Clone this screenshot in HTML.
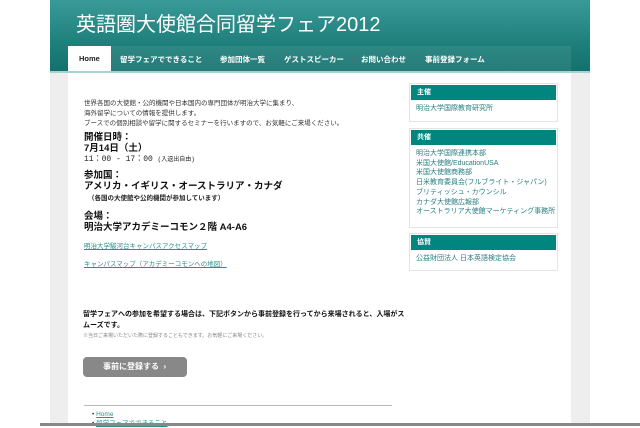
<!DOCTYPE html>
<html><head><meta charset="utf-8"><style>
*{margin:0;padding:0;box-sizing:border-box}
body{width:640px;height:426px;overflow:hidden;background:#fff;position:relative;font-family:"Liberation Sans","Noto Sans CJK JP",sans-serif;}
.a{position:absolute;white-space:nowrap}
#hd{left:50px;top:0;width:540px;height:72px;background:linear-gradient(#3a9a98,#1e7f7b 60%,#13716d)}
#nav{left:68px;top:46px;width:503px;height:25px;background:rgba(255,255,255,0.08)}
#bar{left:50px;top:71px;width:540px;height:2px;background:#a6d2d0}
#gr{left:50px;top:73px;width:540px;height:351px;background:#eee}
#wh{left:68px;top:73px;width:503px;height:351px;background:#fff}
#bot{left:40px;top:423px;width:600px;height:3px;background:#888}
.n{font-size:7.5px;font-weight:bold;color:#fff;top:54px}
.t{font-size:6.5px;color:#333}
.h{font-size:9.5px;font-weight:bold;color:#111}
.lk{font-size:6.5px;color:#2a8f8b;text-decoration:underline}
.box{position:absolute;left:409px;width:149px;background:#fff;border:1px solid #e4e4e4}
.bh{background:#00857f;color:#fff;font-size:7px;font-weight:bold;height:15px;line-height:15px;padding-left:6px;margin:1px}
.bi{font-size:7px;color:#2a7f80;padding:3px 0 0 6px;line-height:9.7px}
</style></head><body>
<div class="a" id="hd"></div>
<div class="a" id="nav"></div>
<div class="a" id="bar"></div>
<div class="a" id="gr"></div>
<div class="a" id="wh"></div>
<div class="a" style="left:76px;top:8px;font-size:20px;color:#fff">英語圏大使館合同留学フェア2012</div>
<div class="a" style="left:68px;top:46px;width:43px;height:25px;background:#fff"></div>
<div class="a n" style="left:79px;color:#222">Home</div>
<div class="a n" style="left:120px">留学フェアでできること</div>
<div class="a n" style="left:220px">参加団体一覧</div>
<div class="a n" style="left:284px">ゲストスピーカー</div>
<div class="a n" style="left:361px">お問い合わせ</div>
<div class="a n" style="left:425px">事前登録フォーム</div>

<div class="a t" style="left:84px;top:99px;line-height:10px">世界各国の大使館・公的機関や日本国内の専門団体が明治大学に集まり、<br>海外留学についての情報を提供します。<br>ブースでの個別相談や留学に関するセミナーを行いますので、お気軽にご来場ください。</div>
<div class="a h" style="left:84px;top:132px;line-height:11px">開催日時：<br>7月14日（土）</div>
<div class="a" style="left:84px;top:153px;font-size:8px;color:#222;font-family:'Liberation Mono','Noto Sans CJK JP',monospace">11：00 - 17：00 <span style="font-size:6px">(入退出自由)</span></div>
<div class="a h" style="left:84px;top:170px;line-height:11px">参加国：<br>アメリカ・イギリス・オーストラリア・カナダ</div>
<div class="a" style="left:88px;top:192px;font-size:6.5px;font-weight:bold;color:#222">（各国の大使館や公的機関が参加しています）</div>
<div class="a h" style="left:84px;top:211px;line-height:11px">会場：<br>明治大学アカデミーコモン２階 A4-A6</div>
<div class="a lk" style="left:84px;top:240px">明治大学駿河台キャンパスアクセスマップ</div>
<div class="a lk" style="left:84px;top:258px">キャンパスマップ（アカデミーコモンへの地図）</div>
<div class="a" style="left:83px;top:309px;font-size:7px;font-weight:bold;color:#111;line-height:11px">留学フェアへの参加を希望する場合は、下記ボタンから事前登録を行ってから来場されると、入場がス<br>ムーズです。</div>
<div class="a" style="left:83px;top:332px;font-size:5px;color:#888">※当日ご来場いただいた際に登録することもできます。お気軽にご来場ください。</div>
<div class="a" style="left:83px;top:357px;width:104px;height:20px;background:#888;border-radius:4px;color:#fff;font-size:8px;font-weight:bold;line-height:20px;padding-left:20px">事前に登録する &nbsp;›</div>
<div class="a" style="left:84px;top:405px;width:308px;height:1px;background:#bbb"></div>
<div class="a" style="left:92px;top:410px;font-size:6.5px;color:#333;line-height:9px">• <span class="lk">Home</span><br>• <span class="lk">留学フェアでできること</span></div>
<div class="a" id="bot"></div>

<div class="box" style="top:83px;height:39px"><div class="bh">主催</div><div class="bi">明治大学国際教育研究所</div></div>
<div class="box" style="top:128px;height:100px"><div class="bh">共催</div><div class="bi">明治大学国際連携本部<br>米国大使館/EducationUSA<br>米国大使館商務部<br>日米教育委員会(フルブライト・ジャパン)<br>ブリティッシュ・カウンシル<br>カナダ大使館広報部<br>オーストラリア大使館マーケティング事務所</div></div>
<div class="box" style="top:233px;height:38px"><div class="bh">協賛</div><div class="bi">公益財団法人 日本英語検定協会</div></div>
</body></html>
